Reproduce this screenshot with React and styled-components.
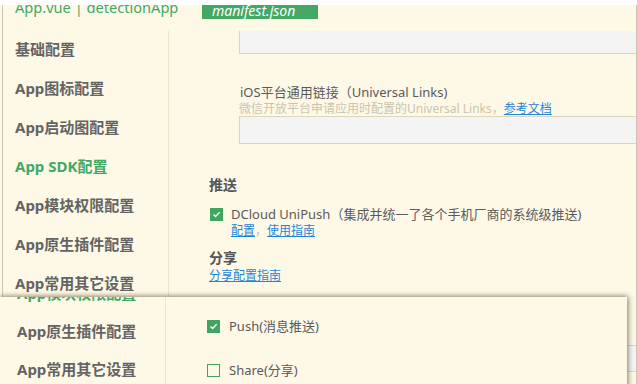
import React from "react";
import styled, { createGlobalStyle } from "styled-components";

const Global = createGlobalStyle`
  html, body { margin: 0; padding: 0; background: #fff; }
  body { width: 637px; height: 384px; overflow: hidden;
    font-family: "Noto Sans", "Noto Sans CJK SC", sans-serif; }
`;

const CREAM = "#fef8e6";
const GREEN = "#3fa964";
const TEXT = "#5a5a5a";
const LINK = "#1f86d6";
const LINE = "#ddd5b8";

const Screen = styled.div`
  position: relative;
  width: 637px;
  height: 384px;
  overflow: hidden;
  background: #fff;
`;

const TopStrip = styled.div`
  height: 5px;
  background: #fff;
`;

const Window = styled.div`
  height: 379px;
  background: ${CREAM};
  padding-left: 2px;
  display: flex;
`;

const Frame = styled.div`
  flex: 1;
  border-left: 1px solid #cbc6b6;
  border-right: 1px solid #c9c4b4;
  display: flex;
  flex-direction: column;
  min-width: 0;
`;

const Header = styled.div`
  height: 26px;
  display: flex;
  align-items: flex-start;
  overflow: hidden;
  flex-shrink: 0;
`;

const FileTitle = styled.div`
  margin: -8px 0 0 12px;
  width: 187px;
  font-size: 14.6px;
  line-height: 20px;
  color: ${GREEN};
  white-space: nowrap;
`;

const Tab = styled.div`
  width: 116px;
  height: 14px;
  background: #42a864;
  color: #fff;
  font-style: italic;
  font-size: 14px;
  line-height: 12px;
  padding-left: 10px;
  box-sizing: border-box;
  overflow: hidden;
  white-space: nowrap;
`;

const Body = styled.div`
  flex: 1;
  display: flex;
  min-height: 0;
`;

const Sidebar = styled.div`
  width: 165px;
  flex-shrink: 0;
  border-right: 1px solid #ece5cc;
  display: flex;
  flex-direction: column;
  margin-top: ${(p) => p.$offset || 0}px;
`;

const NavItem = styled.div`
  box-sizing: border-box;
  height: ${(p) => p.$h || 39}px;
  padding-bottom: 4px;
  display: flex;
  align-items: center;
  padding-left: ${(p) => p.$pl || 12}px;
  font-size: 15px;
  font-weight: 700;
  color: ${(p) => (p.$active ? GREEN : "#646464")};
  white-space: nowrap;
  flex-shrink: 0;
`;

const Content = styled.div`
  flex: 1;
  display: flex;
  flex-direction: column;
  align-items: flex-start;
  min-width: 0;
  padding-left: 40px;
`;

const Input = styled.div`
  align-self: stretch;
  margin-left: 30px;
  height: ${(p) => p.$h}px;
  margin-top: ${(p) => p.$mt || 0}px;
  background: #f4f4f4;
  border: 1px solid ${LINE};
  border-right: none;
  border-top: ${(p) => (p.$noTop ? "none" : `1px solid ${LINE}`)};
  flex-shrink: 0;
`;

const FieldLabel = styled.div`
  margin-top: ${(p) => p.$mt}px;
  margin-left: 31px;
  font-size: 13px;
  line-height: 18px;
  color: ${TEXT};
  white-space: nowrap;
`;

const Hint = styled.div`
  margin-left: 30px;
  font-size: 12px;
  line-height: 16px;
  color: #cbc4b0;
  white-space: nowrap;
`;

const Link = styled.a`
  color: ${LINK};
  text-decoration: underline;
  cursor: pointer;
`;

const SectionTitle = styled.div`
  margin-top: ${(p) => p.$mt}px;
  font-size: 14px;
  line-height: 18px;
  font-weight: 700;
  color: #555;
`;

const CheckRow = styled.div`
  display: flex;
  align-items: center;
  gap: ${(p) => p.$gap || 8}px;
  margin-top: ${(p) => p.$mt}px;
  margin-left: 1px;
  font-size: 13px;
  line-height: 18px;
  color: ${TEXT};
  white-space: nowrap;
`;

const SubLinks = styled.div`
  margin: -1px 0 0 22px;
  font-size: 12px;
  line-height: 17px;
  color: #c9c2ae;
`;

const LinkLine = styled.div`
  margin-top: ${(p) => p.$mt || 0}px;
  font-size: 12px;
  line-height: 17px;
`;

const Box = styled.span`
  width: 13px;
  height: 13px;
  box-sizing: border-box;
  flex-shrink: 0;
  display: inline-flex;
  align-items: center;
  justify-content: center;
  background: ${(p) => (p.$checked ? "#41a562" : "transparent")};
  border: 1px solid #41a562;
`;

const Checkbox = ({ checked }) => (
  <Box $checked={checked}>
    {checked && (
      <svg width="9" height="9" viewBox="0 0 9 9">
        <path d="M1.5 4.6 L3.6 6.6 L7.6 2.3" fill="none" stroke="#fff" strokeWidth="1.4" />
      </svg>
    )}
  </Box>
);

const Overlay = styled.div`
  position: absolute;
  left: 0;
  top: 297px;
  width: 627px;
  height: 100px;
  background: ${CREAM};
  box-shadow: 0 -1px 5px rgba(80, 70, 40, 0.45), 2px 0 5px rgba(80, 70, 40, 0.35);
  display: flex;
  overflow: hidden;
`;

const OverlayContent = styled.div`
  flex: 1;
  display: flex;
  flex-direction: column;
  padding-left: 40px;
`;

const sideItems = [
  "基础配置",
  "App图标配置",
  "App启动图配置",
  "App SDK配置",
  "App模块权限配置",
  "App原生插件配置",
  "App常用其它设置",
];

export default function App() {
  return (
    <>
      <Global />
      <Screen>
        <TopStrip />
        <Window>
          <Frame>
            <Header>
              <FileTitle>App.vue | detectionApp</FileTitle>
              <Tab>manifest.json</Tab>
            </Header>
            <Body>
              <Sidebar>
                {sideItems.map((s) => (
                  <NavItem key={s} $active={s === "App SDK配置"}>
                    {s}
                  </NavItem>
                ))}
              </Sidebar>
              <Content>
                <Input $h={22} $noTop />
                <FieldLabel $mt={29}>iOS平台通用链接（Universal Links)</FieldLabel>
                <Hint>
                  微信开放平台申请应用时配置的Universal Links，<Link>参考文档</Link>
                </Hint>
                <Input $h={26} $mt={-1} />
                <SectionTitle $mt={32}>推送</SectionTitle>
                <CheckRow $mt={11}>
                  <Checkbox checked />
                  DCloud UniPush（集成并统一了各个手机厂商的系统级推送)
                </CheckRow>
                <SubLinks>
                  <Link>配置</Link>，<Link>使用指南</Link>
                </SubLinks>
                <SectionTitle $mt={10}>分享</SectionTitle>
                <LinkLine>
                  <Link>分享配置指南</Link>
                </LinkLine>
                <Input $h={25} $mt={61} />
              </Content>
            </Body>
          </Frame>
        </Window>
        <Overlay>
          <Sidebar $offset={-22}>
            <NavItem $h={38} $pl={17} $active>
              App模块权限配置
            </NavItem>
            <NavItem $h={38} $pl={17}>
              App原生插件配置
            </NavItem>
            <NavItem $h={38} $pl={17}>
              App常用其它设置
            </NavItem>
          </Sidebar>
          <OverlayContent>
            <CheckRow $mt={20} $gap={9}>
              <Checkbox checked />
              Push(消息推送)
            </CheckRow>
            <CheckRow $mt={26} $gap={9}>
              <Checkbox />
              Share(分享)
            </CheckRow>
          </OverlayContent>
        </Overlay>
      </Screen>
    </>
  );
}
